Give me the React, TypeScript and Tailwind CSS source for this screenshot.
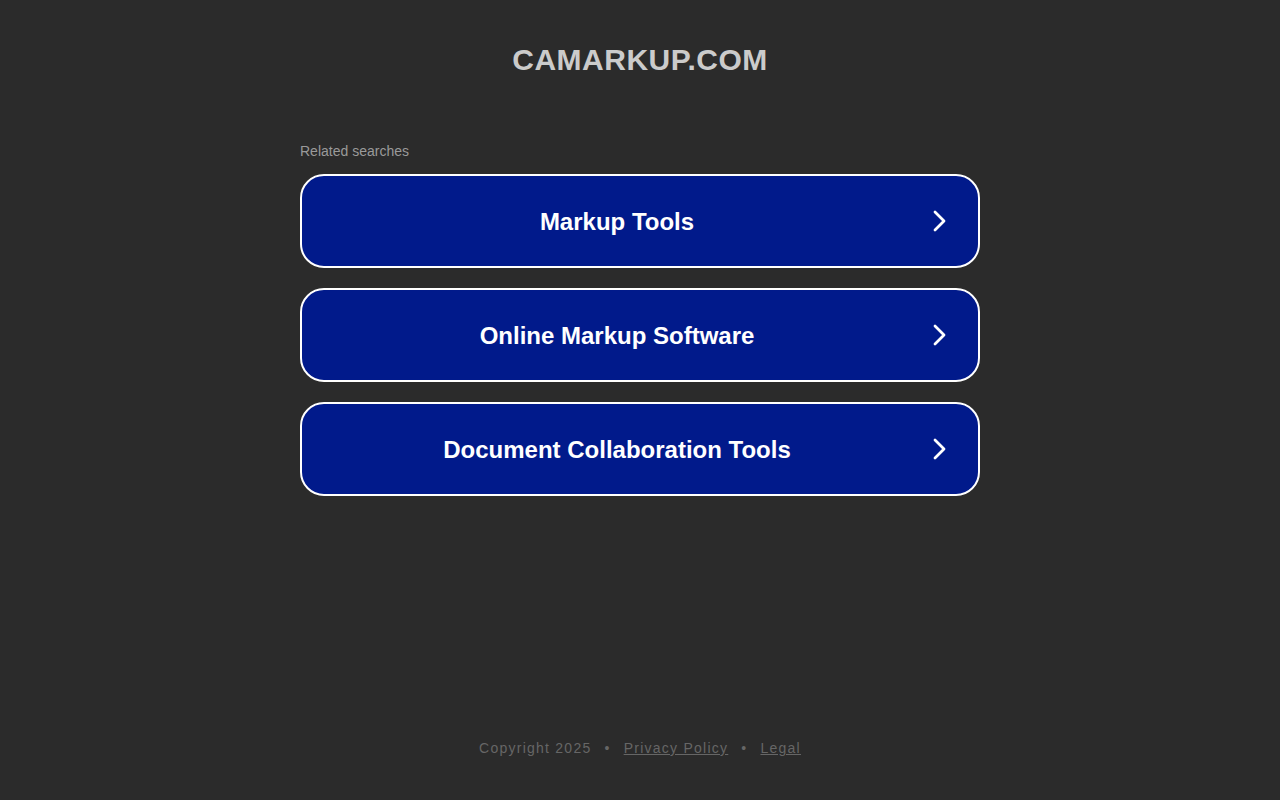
import React from "react";

const items = ["Markup Tools", "Online Markup Software", "Document Collaboration Tools"];

function Chevron() {
  return (
    <svg width="16" height="22" viewBox="0 0 16 22" className="shrink-0">
      <path d="M3 2 L12 11 L3 20" fill="none" stroke="#ffffff" strokeWidth="2.8" strokeLinecap="round" strokeLinejoin="round" />
    </svg>
  );
}

export default function App() {
  return (
    <div
      className="min-h-[800px] bg-[#2b2b2b] flex flex-col items-center"
      style={{ fontFamily: '"Liberation Sans", Arial, sans-serif' }}
    >
      <h1 className="mt-[40px] text-[30px] leading-[40px] font-bold text-[#cbcbcb] tracking-[0.5px]">
        CAMARKUP.COM
      </h1>
      <div className="mt-[63px] w-[680px] flex flex-col">
        <div className="text-[14px] leading-[16px] text-[#9a9a9a] mb-[15px]">Related searches</div>
        <div className="flex flex-col gap-[20px]">
          {items.map((t) => (
            <div
              key={t}
              className="h-[94px] rounded-[24px] border-2 border-white bg-[#011a8b] flex items-center pl-0 pr-[30px]"
            >
              <span className="flex-1 text-center text-[24px] leading-[30px] font-bold text-white pt-[2px]">{t}</span>
              <Chevron />
            </div>
          ))}
        </div>
      </div>
      <div className="flex-1" />
      <div className="mb-[44px] flex items-center text-[14px] leading-[16px] tracking-[1.25px] text-[#666666]">
        <span>Copyright 2025</span>
        <span className="mx-[13px]">•</span>
        <span className="underline">Privacy Policy</span>
        <span className="mx-[13px]">•</span>
        <span className="underline">Legal</span>
      </div>
    </div>
  );
}
